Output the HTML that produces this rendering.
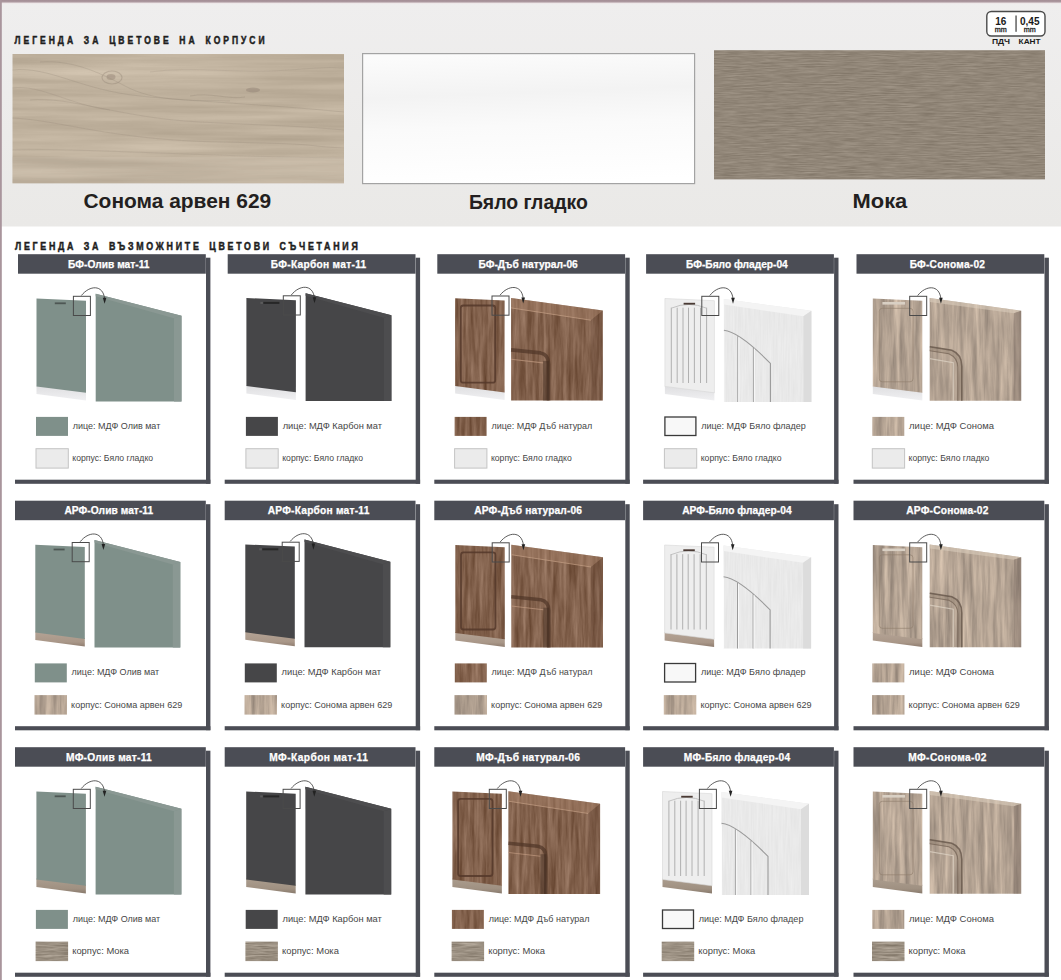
<!DOCTYPE html><html><head><meta charset="utf-8"><title>Legend</title><style>html,body{margin:0;padding:0;background:#fff;width:1061px;height:980px;overflow:hidden}body{font-family:"Liberation Sans",sans-serif}</style></head><body><svg width="1061" height="980" viewBox="0 0 1061 980" style="display:block" font-family="'Liberation Sans', sans-serif"><defs><filter id="tSonH" x="0" y="0" width="100%" height="100%" color-interpolation-filters="sRGB"><feTurbulence type="fractalNoise" baseFrequency="0.004 0.09" numOctaves="5" seed="3" result="n"/><feColorMatrix in="n" type="matrix" values="0.1800 0.0000 0.0000 0.0000 0.6590 0.1800 0.0000 0.0000 0.0000 0.6041 0.1800 0.0000 0.0000 0.0000 0.5257 0.0000 0.0000 0.0000 0.0000 1.0000" result="c"/><feComposite in="c" in2="SourceGraphic" operator="in"/></filter><filter id="tMokaH" x="0" y="0" width="100%" height="100%" color-interpolation-filters="sRGB"><feTurbulence type="fractalNoise" baseFrequency="0.05 0.9" numOctaves="3" seed="5" result="n"/><feColorMatrix in="n" type="matrix" values="0.1600 0.0000 0.0000 0.0000 0.4886 0.1600 0.0000 0.0000 0.0000 0.4455 0.1600 0.0000 0.0000 0.0000 0.3906 0.0000 0.0000 0.0000 0.0000 1.0000" result="c"/><feComposite in="c" in2="SourceGraphic" operator="in"/></filter><filter id="tSonV" x="0" y="0" width="100%" height="100%" color-interpolation-filters="sRGB"><feTurbulence type="fractalNoise" baseFrequency="0.2 0.015" numOctaves="4" seed="7" result="n"/><feColorMatrix in="n" type="matrix" values="0.3700 0.0000 0.0000 0.0000 0.5209 0.3400 0.0000 0.0000 0.0000 0.4692 0.3000 0.0000 0.0000 0.0000 0.4265 0.0000 0.0000 0.0000 0.0000 1.0000" result="c"/><feComposite in="c" in2="SourceGraphic" operator="in"/></filter><filter id="tOakV" x="0" y="0" width="100%" height="100%" color-interpolation-filters="sRGB"><feTurbulence type="fractalNoise" baseFrequency="0.25 0.02" numOctaves="4" seed="9" result="n"/><feColorMatrix in="n" type="matrix" values="0.3000 0.0000 0.0000 0.0000 0.3637 0.3000 0.0000 0.0000 0.0000 0.2343 0.3000 0.0000 0.0000 0.0000 0.1520 0.0000 0.0000 0.0000 0.0000 1.0000" result="c"/><feComposite in="c" in2="SourceGraphic" operator="in"/></filter><filter id="tMokaS" x="0" y="0" width="100%" height="100%" color-interpolation-filters="sRGB"><feTurbulence type="fractalNoise" baseFrequency="0.05 0.9" numOctaves="3" seed="13" result="n"/><feColorMatrix in="n" type="matrix" values="0.3000 0.0000 0.0000 0.0000 0.4578 0.3000 0.0000 0.0000 0.0000 0.4147 0.3000 0.0000 0.0000 0.0000 0.3598 0.0000 0.0000 0.0000 0.0000 1.0000" result="c"/><feComposite in="c" in2="SourceGraphic" operator="in"/></filter><filter id="tWhiteV" x="0" y="0" width="100%" height="100%" color-interpolation-filters="sRGB"><feTurbulence type="fractalNoise" baseFrequency="0.6 0.03" numOctaves="2" seed="11" result="n"/><feColorMatrix in="n" type="matrix" values="0.0500 0.0000 0.0000 0.0000 0.8887 0.0500 0.0000 0.0000 0.0000 0.8887 0.0500 0.0000 0.0000 0.0000 0.8887 0.0000 0.0000 0.0000 0.0000 1.0000" result="c"/><feComposite in="c" in2="SourceGraphic" operator="in"/></filter><linearGradient id="gWhiteSw" x1="0.45" y1="0" x2="0.55" y2="1"><stop offset="0" stop-color="#fbfbfb"/><stop offset="0.3" stop-color="#f3f3f3"/><stop offset="0.55" stop-color="#fafafa"/><stop offset="1" stop-color="#ffffff"/></linearGradient><linearGradient id="gBand" x1="0" y1="0" x2="0" y2="1"><stop offset="0" stop-color="#efeeee"/><stop offset="1" stop-color="#eae9e7"/></linearGradient><linearGradient id="gPlinth" x1="0" y1="0" x2="0" y2="1"><stop offset="0" stop-color="#dedee0"/><stop offset="1" stop-color="#f0f0f2"/></linearGradient><linearGradient id="gTop" x1="0" y1="0" x2="0" y2="1"><stop offset="0" stop-color="#a38d95"/><stop offset="0.45" stop-color="#ab979e"/><stop offset="1" stop-color="#f0e8ea"/></linearGradient><linearGradient id="gPlSon" x1="0" y1="0" x2="0" y2="1"><stop offset="0" stop-color="#b4a395"/><stop offset="0.7" stop-color="#a99788"/><stop offset="1" stop-color="#8f7d70"/></linearGradient><linearGradient id="gPlMoka" x1="0" y1="0" x2="0" y2="1"><stop offset="0" stop-color="#ab9d8e"/><stop offset="0.7" stop-color="#9f9081"/><stop offset="1" stop-color="#887a6d"/></linearGradient><filter id="blur1" x="-5%" y="-20%" width="110%" height="140%"><feGaussianBlur stdDeviation="0.7"/></filter><marker id="arr" viewBox="0 0 10 10" refX="5" refY="9" markerWidth="5" markerHeight="6" orient="auto-start-reverse"><path d="M0,0 L10,0 L5,10 z" fill="#222"/></marker></defs><rect x="0" y="0" width="1061" height="980" fill="#ffffff"/><rect x="0" y="0" width="1061" height="226.5" fill="url(#gBand)"/><rect x="0" y="0" width="1061" height="3.6" fill="url(#gTop)"/><rect x="0" y="0" width="1.8" height="980" fill="#a9959c"/><g transform="scale(0.82 1)"><text x="17.80" y="43.80" font-size="10.40" fill="#1e1e1e" font-weight="bold" text-anchor="start" word-spacing="3" stroke="#1e1e1e" stroke-width="0.5" textLength="304.88" lengthAdjust="spacing">ЛЕГЕНДА ЗА ЦВЕТОВЕ НА КОРПУСИ</text></g><rect x="986.8" y="11.5" width="58.2" height="24.5" rx="4.5" fill="#ffffff" stroke="#4a4a4a" stroke-width="1.4"/><rect x="1015.4" y="15.5" width="1.3" height="16.3" fill="#4a4a4a"/><text x="1000.70" y="25.20" font-size="10.00" fill="#1a1a1a" font-weight="bold" text-anchor="middle">16</text><text x="1000.70" y="32.20" font-size="7.20" fill="#1a1a1a" font-weight="normal" text-anchor="middle" stroke="#1a1a1a" stroke-width="0.3">mm</text><text x="1029.70" y="25.20" font-size="10.00" fill="#1a1a1a" font-weight="bold" text-anchor="middle" textLength="19.60" lengthAdjust="spacingAndGlyphs">0,45</text><text x="1029.70" y="32.20" font-size="7.20" fill="#1a1a1a" font-weight="normal" text-anchor="middle" stroke="#1a1a1a" stroke-width="0.3">mm</text><text x="1001.00" y="44.00" font-size="7.00" fill="#1a1a1a" font-weight="bold" text-anchor="middle" textLength="18.00" lengthAdjust="spacingAndGlyphs">ПДЧ</text><text x="1029.60" y="44.00" font-size="7.00" fill="#1a1a1a" font-weight="bold" text-anchor="middle" textLength="22.00" lengthAdjust="spacingAndGlyphs">КАНТ</text><rect x="12.5" y="54" width="331.5" height="129.3" fill="#000" filter="url(#tSonH)"/><clipPath id="cpSon"><rect x="12.5" y="54" width="331.5" height="129.3"/></clipPath><g clip-path="url(#cpSon)"><g fill="none" stroke="#85776a" stroke-width="1" filter="url(#blur1)" opacity="0.6"><path d="M12,70 C50,66 80,90 140,96 S260,104 344,112" opacity="0.35"/><path d="M30,100 C70,96 120,118 200,122 S300,126 344,130" opacity="0.3"/><path d="M12,118 C60,120 110,140 220,142 S300,146 344,148" opacity="0.3"/><path d="M40,62 C70,60 95,70 125,86 S190,100 230,101" opacity="0.35"/><path d="M12,88 C40,84 70,105 110,110" opacity="0.3"/><path d="M150,72 C190,66 240,74 290,70 S330,68 344,68" opacity="0.25"/><path d="M12,150 C90,148 180,156 344,158" opacity="0.25"/><path d="M190,96 C210,92 230,100 245,97" opacity="0.4"/><ellipse cx="112" cy="77.5" rx="10" ry="6.5" opacity="0.5" stroke-width="1.2"/><ellipse cx="111" cy="77" rx="4.5" ry="3" fill="#7f6f61" stroke="none" opacity="0.55"/><ellipse cx="253" cy="90" rx="7" ry="2.6" fill="#85766a" stroke="none" opacity="0.6"/></g></g><rect x="12.5" y="157" width="331.5" height="26.3" fill="#cfc3b2" opacity="0.25"/><rect x="362.6" y="53.6" width="332" height="130" fill="url(#gWhiteSw)" stroke="#a3a3a3" stroke-width="1.2"/><rect x="714" y="50.2" width="331" height="129.2" fill="#000" filter="url(#tMokaH)"/><text x="83.50" y="208.00" font-size="20.50" fill="#231f20" font-weight="bold" text-anchor="start" textLength="187.70" lengthAdjust="spacingAndGlyphs">Сонома арвен 629</text><text x="468.90" y="208.60" font-size="20.00" fill="#231f20" font-weight="bold" text-anchor="start" textLength="119.00" lengthAdjust="spacingAndGlyphs">Бяло гладко</text><text x="852.60" y="208.30" font-size="20.00" fill="#231f20" font-weight="bold" text-anchor="start" textLength="54.70" lengthAdjust="spacingAndGlyphs">Мока</text><g transform="scale(0.82 1)"><text x="18.29" y="250.00" font-size="10.80" fill="#1e1e1e" font-weight="bold" text-anchor="start" word-spacing="3" stroke="#1e1e1e" stroke-width="0.5" textLength="418.05" lengthAdjust="spacing">ЛЕГЕНДА ЗА ВЪЗМОЖНИТЕ ЦВЕТОВИ СЪЧЕТАНИЯ</text></g><rect x="18.00" y="254.20" width="187.80" height="19.5" fill="#4b4d55"/><rect x="206.00" y="257.70" width="4.4" height="226.00" fill="#4b4d55"/><rect x="15.00" y="479.70" width="195.4" height="4.1" fill="#4b4d55"/><text x="68.10" y="267.50" font-size="10.20" fill="#ffffff" font-weight="bold" text-anchor="start" stroke="#ffffff" stroke-width="0.25" textLength="81.40" lengthAdjust="spacing">БФ-Олив мат-11</text><polygon points="36.50,385.40 86.00,391.80 86.00,400.40 36.50,393.90" fill="url(#gPlinth)"/><polygon points="36.50,298.50 86.00,300.70 86.00,392.80 36.50,386.40" fill="#7f908a"/><rect x="54.80" y="302.40" width="11" height="1.8" fill="#1e1e1e" opacity="0.5"/><polygon points="95.70,293.70 181.50,315.80 181.50,401.40 95.70,401.40" fill="#7f908a"/><polygon points="174.00,318.30 181.50,315.80 181.50,401.40 174.00,401.40" fill="#8a9893"/><polygon points="95.70,293.70 181.50,315.80 174.00,318.30 95.70,296.20" fill="#8a9893"/><rect x="73.40" y="296.30" width="17" height="19.2" fill="none" stroke="#4a4a4a" stroke-width="1"/><path d="M81.40,295.50 C89.50,285.20 103.00,284.20 104.60,298.70" fill="none" stroke="#333333" stroke-width="0.8"/><path d="M102.80,297.70 L106.40,297.70 L104.60,303.80 Z" fill="#222"/><rect x="36.00" y="416.90" width="32" height="19" fill="#7f908a"/><rect x="36.00" y="448.70" width="32.3" height="19.4" fill="#ebebeb" stroke="#c4c4c4" stroke-width="1"/><text x="72.80" y="428.90" font-size="9.70" fill="#464646" font-weight="normal" text-anchor="start" textLength="87.50" lengthAdjust="spacingAndGlyphs">лице: МДФ Олив мат</text><text x="72.30" y="461.00" font-size="9.70" fill="#464646" font-weight="normal" text-anchor="start" textLength="80.80" lengthAdjust="spacingAndGlyphs">корпус: Бяло гладко</text><rect x="227.70" y="254.20" width="187.80" height="19.5" fill="#4b4d55"/><rect x="415.70" y="257.70" width="4.4" height="226.00" fill="#4b4d55"/><rect x="224.70" y="479.70" width="195.4" height="4.1" fill="#4b4d55"/><text x="270.80" y="267.50" font-size="10.20" fill="#ffffff" font-weight="bold" text-anchor="start" stroke="#ffffff" stroke-width="0.25" textLength="95.40" lengthAdjust="spacing">БФ-Карбон мат-11</text><polygon points="246.40,384.90 295.90,391.30 295.90,399.90 246.40,393.40" fill="url(#gPlinth)"/><polygon points="246.40,298.00 295.90,300.20 295.90,392.30 246.40,385.90" fill="#464648"/><rect x="263.40" y="301.90" width="16" height="2" fill="#1a1a1a" opacity="0.7"/><rect x="260.40" y="301.90" width="2.5" height="2" fill="#6a6a6a" opacity="0.6"/><polygon points="305.60,293.20 391.40,315.30 391.40,400.90 305.60,400.90" fill="#464648"/><polygon points="383.90,317.80 391.40,315.30 391.40,400.90 383.90,400.90" fill="#4d4d4f"/><polygon points="305.60,293.20 391.40,315.30 383.90,317.80 305.60,295.70" fill="#4d4d4f"/><rect x="283.30" y="295.80" width="17" height="19.2" fill="none" stroke="#4a4a4a" stroke-width="1"/><path d="M291.30,295.00 C299.40,284.70 312.90,283.70 314.50,298.20" fill="none" stroke="#333333" stroke-width="0.8"/><path d="M312.70,297.20 L316.30,297.20 L314.50,303.30 Z" fill="#222"/><rect x="245.90" y="416.90" width="32" height="19" fill="#464648"/><rect x="245.90" y="448.70" width="32.3" height="19.4" fill="#ebebeb" stroke="#c4c4c4" stroke-width="1"/><text x="282.70" y="428.90" font-size="9.70" fill="#464646" font-weight="normal" text-anchor="start" textLength="99.30" lengthAdjust="spacingAndGlyphs">лице: МДФ Карбон мат</text><text x="282.20" y="461.00" font-size="9.70" fill="#464646" font-weight="normal" text-anchor="start" textLength="80.80" lengthAdjust="spacingAndGlyphs">корпус: Бяло гладко</text><rect x="437.30" y="254.20" width="187.80" height="19.5" fill="#4b4d55"/><rect x="625.30" y="257.70" width="4.4" height="226.00" fill="#4b4d55"/><rect x="434.30" y="479.70" width="195.4" height="4.1" fill="#4b4d55"/><text x="478.45" y="267.50" font-size="10.20" fill="#ffffff" font-weight="bold" text-anchor="start" stroke="#ffffff" stroke-width="0.25" textLength="99.30" lengthAdjust="spacing">БФ-Дъб натурал-06</text><polygon points="455.10,385.10 504.60,391.50 504.60,400.10 455.10,393.60" fill="url(#gPlinth)"/><polygon points="455.10,298.20 504.60,300.40 504.60,392.50 455.10,386.10" fill="#000" filter="url(#tOakV)"/><rect x="460.80" y="305.50" width="34.4" height="77.2" rx="2.5" fill="none" stroke="#55382a" stroke-width="1.8" opacity="0.85"/><polygon points="511.10,297.90 602.80,310.40 602.80,400.60 511.10,400.60" fill="#000" filter="url(#tOakV)"/><polygon points="511.10,297.90 602.80,310.40 590.80,320.20 511.10,307.90" fill="#b08a70" opacity="0.4"/><polygon points="590.80,320.20 602.80,310.40 602.80,400.60 590.80,400.60" fill="#5a3e2e" opacity="0.2"/><line x1="511.10" y1="307.90" x2="590.80" y2="320.20" stroke="#c9a58a" stroke-width="0.8" opacity="0.8"/><path d="M511.10,349.90 L540.60,352.90 Q548.60,354.40 548.60,363.90 L548.60,400.60" fill="none" stroke="#4f3526" stroke-width="3.6" opacity="0.7"/><rect x="543.10" y="360.90" width="6" height="39.70" fill="#3e2a1f" opacity="0.45"/><path d="M511.10,359.20 L543.10,362.90" fill="none" stroke="#c09a80" stroke-width="1.1" opacity="0.7"/><rect x="492.00" y="296.00" width="17" height="19.2" fill="none" stroke="#4a4a4a" stroke-width="1"/><path d="M500.00,295.20 C508.10,284.90 521.60,283.90 523.20,298.40" fill="none" stroke="#333333" stroke-width="0.8"/><path d="M521.40,297.40 L525.00,297.40 L523.20,303.50 Z" fill="#222"/><rect x="454.60" y="416.90" width="32" height="19" fill="#000" filter="url(#tOakV)"/><rect x="454.60" y="448.70" width="32.3" height="19.4" fill="#ebebeb" stroke="#c4c4c4" stroke-width="1"/><text x="491.40" y="428.90" font-size="9.70" fill="#464646" font-weight="normal" text-anchor="start" textLength="100.90" lengthAdjust="spacingAndGlyphs">лице: МДФ Дъб натурал</text><text x="490.90" y="461.00" font-size="9.70" fill="#464646" font-weight="normal" text-anchor="start" textLength="80.80" lengthAdjust="spacingAndGlyphs">корпус: Бяло гладко</text><rect x="646.10" y="254.20" width="187.80" height="19.5" fill="#4b4d55"/><rect x="834.10" y="257.70" width="4.4" height="226.00" fill="#4b4d55"/><rect x="643.10" y="479.70" width="195.4" height="4.1" fill="#4b4d55"/><text x="686.10" y="267.50" font-size="10.20" fill="#ffffff" font-weight="bold" text-anchor="start" stroke="#ffffff" stroke-width="0.25" textLength="101.60" lengthAdjust="spacing">БФ-Бяло фладер-04</text><polygon points="664.90,385.40 714.40,391.80 714.40,400.40 664.90,393.90" fill="url(#gPlinth)"/><polygon points="664.90,298.50 714.40,300.70 714.40,392.80 664.90,386.40" fill="#eeeeee" stroke="#d6d6d6" stroke-width="0.6"/><line x1="671.30" y1="307.70" x2="671.30" y2="383.00" stroke="#a9a9a9" stroke-width="0.9"/><line x1="677.20" y1="307.70" x2="677.20" y2="383.00" stroke="#a9a9a9" stroke-width="0.9"/><line x1="683.00" y1="307.70" x2="683.00" y2="383.00" stroke="#a9a9a9" stroke-width="0.9"/><line x1="688.50" y1="307.70" x2="688.50" y2="383.00" stroke="#a9a9a9" stroke-width="0.9"/><line x1="694.40" y1="307.70" x2="694.40" y2="383.00" stroke="#a9a9a9" stroke-width="0.9"/><line x1="700.50" y1="307.70" x2="700.50" y2="383.00" stroke="#a9a9a9" stroke-width="0.9"/><line x1="706.60" y1="307.70" x2="706.60" y2="383.00" stroke="#a9a9a9" stroke-width="0.9"/><path d="M671.20,308.20 Q688.90,300.70 706.60,308.20" fill="none" stroke="#bdbdbd" stroke-width="0.9"/><rect x="683.60" y="302.80" width="11.5" height="1.8" fill="#4a3a34"/><polygon points="723.90,299.10 811.40,310.70 811.40,402.00 723.90,402.00" fill="#000" filter="url(#tWhiteV)"/><polygon points="723.90,299.10 811.40,310.70 803.40,316.20 723.90,304.60" fill="#f4f4f4"/><polygon points="803.40,316.20 811.40,310.70 811.40,402.00 803.40,402.00" fill="#dcdcdc"/><path d="M723.90,330.30 C737.90,331.70 758.40,351.20 770.40,363.40 L770.40,402.00" fill="none" stroke="#9a9a9a" stroke-width="1.1"/><path d="M723.90,332.20 L723.90,402.00" fill="none" stroke="#ffffff" stroke-width="1" opacity="0.8"/><line x1="737.80" y1="336.20" x2="737.80" y2="402.00" stroke="#9c9c9c" stroke-width="1"/><line x1="738.80" y1="337.20" x2="738.80" y2="402.00" stroke="#f8f8f8" stroke-width="1"/><line x1="753.40" y1="347.70" x2="753.40" y2="402.00" stroke="#9c9c9c" stroke-width="1"/><line x1="754.40" y1="348.70" x2="754.40" y2="402.00" stroke="#f8f8f8" stroke-width="1"/><rect x="701.80" y="296.30" width="17" height="19.2" fill="none" stroke="#4a4a4a" stroke-width="1"/><path d="M709.80,295.50 C717.90,285.20 731.40,284.20 733.00,298.70" fill="none" stroke="#333333" stroke-width="0.8"/><path d="M731.20,297.70 L734.80,297.70 L733.00,303.80 Z" fill="#222"/><rect x="664.90" y="417.00" width="31" height="18.5" fill="#f8f8f8" stroke="#3a3a3a" stroke-width="1.3"/><rect x="664.40" y="448.70" width="32.3" height="19.4" fill="#ebebeb" stroke="#c4c4c4" stroke-width="1"/><text x="701.20" y="428.90" font-size="9.70" fill="#464646" font-weight="normal" text-anchor="start" textLength="104.60" lengthAdjust="spacingAndGlyphs">лице: МДФ Бяло фладер</text><text x="700.70" y="461.00" font-size="9.70" fill="#464646" font-weight="normal" text-anchor="start" textLength="80.80" lengthAdjust="spacingAndGlyphs">корпус: Бяло гладко</text><rect x="856.50" y="254.20" width="187.80" height="19.5" fill="#4b4d55"/><rect x="1044.50" y="257.70" width="4.4" height="226.00" fill="#4b4d55"/><rect x="853.50" y="479.70" width="195.4" height="4.1" fill="#4b4d55"/><text x="909.65" y="267.50" font-size="10.20" fill="#ffffff" font-weight="bold" text-anchor="start" stroke="#ffffff" stroke-width="0.25" textLength="75.30" lengthAdjust="spacing">БФ-Сонома-02</text><polygon points="872.80,385.40 922.30,391.80 922.30,400.40 872.80,393.90" fill="url(#gPlinth)"/><polygon points="872.80,298.50 922.30,300.70 922.30,392.80 872.80,386.40" fill="#000" filter="url(#tSonV)"/><rect x="879.30" y="308.30" width="33.7" height="73.5" rx="3" fill="none" stroke="#8f7e6c" stroke-width="0.9" opacity="0.7"/><rect x="882.40" y="302.00" width="22.7" height="2.6" fill="#d9d0c4"/><polygon points="929.70,297.90 1021.20,310.70 1021.20,400.80 929.70,400.80" fill="#000" filter="url(#tSonV)"/><polygon points="929.70,297.90 1021.20,310.70 1013.80,313.20 929.70,301.90" fill="#d8cbbb" opacity="0.6"/><polygon points="1013.80,313.20 1021.20,310.70 1021.20,400.80 1013.80,400.80" fill="#6e6058" opacity="0.4"/><path d="M929.70,348.20 L949.80,351.70 Q959.80,356.20 959.80,367.20 L959.80,400.80" fill="none" stroke="#8a7868" stroke-width="5" opacity="0.35"/><path d="M929.70,346.70 L951.80,350.20 Q961.80,354.20 961.80,366.20 L961.80,400.80" fill="none" stroke="#5e4f43" stroke-width="1.6" opacity="0.7"/><path d="M929.70,350.70 L948.80,353.70 Q957.80,357.70 957.80,367.20 L957.80,400.80" fill="none" stroke="#6a5a4c" stroke-width="1.1" opacity="0.6"/><path d="M929.70,358.70 L953.30,362.70 L953.30,400.80" fill="none" stroke="#e0d5c8" stroke-width="1.2" opacity="0.7"/><rect x="909.70" y="296.30" width="17" height="19.2" fill="none" stroke="#4a4a4a" stroke-width="1"/><path d="M917.70,295.50 C925.80,285.20 939.30,284.20 940.90,298.70" fill="none" stroke="#333333" stroke-width="0.8"/><path d="M939.10,297.70 L942.70,297.70 L940.90,303.80 Z" fill="#222"/><rect x="872.30" y="416.90" width="32" height="19" fill="#000" filter="url(#tSonV)"/><rect x="872.30" y="448.70" width="32.3" height="19.4" fill="#ebebeb" stroke="#c4c4c4" stroke-width="1"/><text x="909.10" y="428.90" font-size="9.70" fill="#464646" font-weight="normal" text-anchor="start" textLength="84.80" lengthAdjust="spacingAndGlyphs">лице: МДФ Сонома</text><text x="908.60" y="461.00" font-size="9.70" fill="#464646" font-weight="normal" text-anchor="start" textLength="80.80" lengthAdjust="spacingAndGlyphs">корпус: Бяло гладко</text><rect x="15.00" y="500.70" width="190.80" height="19.5" fill="#4b4d55"/><rect x="206.00" y="504.20" width="4.4" height="226.00" fill="#4b4d55"/><rect x="15.00" y="726.20" width="195.4" height="4.1" fill="#4b4d55"/><text x="64.40" y="514.00" font-size="10.20" fill="#ffffff" font-weight="bold" text-anchor="start" stroke="#ffffff" stroke-width="0.25" textLength="88.80" lengthAdjust="spacing">АРФ-Олив мат-11</text><polygon points="35.30,631.60 84.80,638.00 84.80,646.60 35.30,640.10" fill="url(#gPlSon)"/><polygon points="35.30,544.70 84.80,546.90 84.80,639.00 35.30,632.60" fill="#7f908a"/><rect x="53.60" y="548.60" width="11" height="1.8" fill="#1e1e1e" opacity="0.5"/><polygon points="94.50,539.90 180.30,562.00 180.30,647.60 94.50,647.60" fill="#7f908a"/><polygon points="172.80,564.50 180.30,562.00 180.30,647.60 172.80,647.60" fill="#8a9893"/><polygon points="94.50,539.90 180.30,562.00 172.80,564.50 94.50,542.40" fill="#8a9893"/><rect x="72.20" y="542.50" width="17" height="19.2" fill="none" stroke="#4a4a4a" stroke-width="1"/><path d="M80.20,541.70 C88.30,531.40 101.80,530.40 103.40,544.90" fill="none" stroke="#333333" stroke-width="0.8"/><path d="M101.60,543.90 L105.20,543.90 L103.40,550.00 Z" fill="#222"/><rect x="34.80" y="663.40" width="32" height="19" fill="#7f908a"/><rect x="34.50" y="695.10" width="32.5" height="19.5" fill="#000" filter="url(#tSonV)"/><text x="71.60" y="675.40" font-size="9.70" fill="#464646" font-weight="normal" text-anchor="start" textLength="87.50" lengthAdjust="spacingAndGlyphs">лице: МДФ Олив мат</text><text x="71.10" y="707.50" font-size="9.70" fill="#464646" font-weight="normal" text-anchor="start" textLength="111.20" lengthAdjust="spacingAndGlyphs">корпус: Сонома арвен 629</text><rect x="224.70" y="500.70" width="190.80" height="19.5" fill="#4b4d55"/><rect x="415.70" y="504.20" width="4.4" height="226.00" fill="#4b4d55"/><rect x="224.70" y="726.20" width="195.4" height="4.1" fill="#4b4d55"/><text x="267.70" y="514.00" font-size="10.20" fill="#ffffff" font-weight="bold" text-anchor="start" stroke="#ffffff" stroke-width="0.25" textLength="101.60" lengthAdjust="spacing">АРФ-Карбон мат-11</text><polygon points="245.30,631.30 294.80,637.70 294.80,646.30 245.30,639.80" fill="url(#gPlSon)"/><polygon points="245.30,544.40 294.80,546.60 294.80,638.70 245.30,632.30" fill="#464648"/><rect x="262.30" y="548.30" width="16" height="2" fill="#1a1a1a" opacity="0.7"/><rect x="259.30" y="548.30" width="2.5" height="2" fill="#6a6a6a" opacity="0.6"/><polygon points="304.50,539.60 390.30,561.70 390.30,647.30 304.50,647.30" fill="#464648"/><polygon points="382.80,564.20 390.30,561.70 390.30,647.30 382.80,647.30" fill="#4d4d4f"/><polygon points="304.50,539.60 390.30,561.70 382.80,564.20 304.50,542.10" fill="#4d4d4f"/><rect x="282.20" y="542.20" width="17" height="19.2" fill="none" stroke="#4a4a4a" stroke-width="1"/><path d="M290.20,541.40 C298.30,531.10 311.80,530.10 313.40,544.60" fill="none" stroke="#333333" stroke-width="0.8"/><path d="M311.60,543.60 L315.20,543.60 L313.40,549.70 Z" fill="#222"/><rect x="244.80" y="663.40" width="32" height="19" fill="#464648"/><rect x="244.50" y="695.10" width="32.5" height="19.5" fill="#000" filter="url(#tSonV)"/><text x="281.60" y="675.40" font-size="9.70" fill="#464646" font-weight="normal" text-anchor="start" textLength="99.30" lengthAdjust="spacingAndGlyphs">лице: МДФ Карбон мат</text><text x="281.10" y="707.50" font-size="9.70" fill="#464646" font-weight="normal" text-anchor="start" textLength="111.20" lengthAdjust="spacingAndGlyphs">корпус: Сонома арвен 629</text><rect x="434.30" y="500.70" width="190.80" height="19.5" fill="#4b4d55"/><rect x="625.30" y="504.20" width="4.4" height="226.00" fill="#4b4d55"/><rect x="434.30" y="726.20" width="195.4" height="4.1" fill="#4b4d55"/><text x="474.35" y="514.00" font-size="10.20" fill="#ffffff" font-weight="bold" text-anchor="start" stroke="#ffffff" stroke-width="0.25" textLength="107.50" lengthAdjust="spacing">АРФ-Дъб натурал-06</text><polygon points="455.30,631.90 504.80,638.30 504.80,646.90 455.30,640.40" fill="url(#gPlSon)"/><polygon points="455.30,545.00 504.80,547.20 504.80,639.30 455.30,632.90" fill="#000" filter="url(#tOakV)"/><rect x="461.00" y="552.30" width="34.4" height="77.2" rx="2.5" fill="none" stroke="#55382a" stroke-width="1.8" opacity="0.85"/><polygon points="511.30,544.70 603.00,557.20 603.00,647.40 511.30,647.40" fill="#000" filter="url(#tOakV)"/><polygon points="511.30,544.70 603.00,557.20 591.00,567.00 511.30,554.70" fill="#b08a70" opacity="0.4"/><polygon points="591.00,567.00 603.00,557.20 603.00,647.40 591.00,647.40" fill="#5a3e2e" opacity="0.2"/><line x1="511.30" y1="554.70" x2="591.00" y2="567.00" stroke="#c9a58a" stroke-width="0.8" opacity="0.8"/><path d="M511.30,596.70 L540.80,599.70 Q548.80,601.20 548.80,610.70 L548.80,647.40" fill="none" stroke="#4f3526" stroke-width="3.6" opacity="0.7"/><rect x="543.30" y="607.70" width="6" height="39.70" fill="#3e2a1f" opacity="0.45"/><path d="M511.30,606.00 L543.30,609.70" fill="none" stroke="#c09a80" stroke-width="1.1" opacity="0.7"/><rect x="492.20" y="542.80" width="17" height="19.2" fill="none" stroke="#4a4a4a" stroke-width="1"/><path d="M500.20,542.00 C508.30,531.70 521.80,530.70 523.40,545.20" fill="none" stroke="#333333" stroke-width="0.8"/><path d="M521.60,544.20 L525.20,544.20 L523.40,550.30 Z" fill="#222"/><rect x="454.80" y="663.40" width="32" height="19" fill="#000" filter="url(#tOakV)"/><rect x="454.50" y="695.10" width="32.5" height="19.5" fill="#000" filter="url(#tSonV)"/><text x="491.60" y="675.40" font-size="9.70" fill="#464646" font-weight="normal" text-anchor="start" textLength="100.90" lengthAdjust="spacingAndGlyphs">лице: МДФ Дъб натурал</text><text x="491.10" y="707.50" font-size="9.70" fill="#464646" font-weight="normal" text-anchor="start" textLength="111.20" lengthAdjust="spacingAndGlyphs">корпус: Сонома арвен 629</text><rect x="643.10" y="500.70" width="190.80" height="19.5" fill="#4b4d55"/><rect x="834.10" y="504.20" width="4.4" height="226.00" fill="#4b4d55"/><rect x="643.10" y="726.20" width="195.4" height="4.1" fill="#4b4d55"/><text x="682.20" y="514.00" font-size="10.20" fill="#ffffff" font-weight="bold" text-anchor="start" stroke="#ffffff" stroke-width="0.25" textLength="109.40" lengthAdjust="spacing">АРФ-Бяло фладер-04</text><polygon points="664.60,631.90 714.10,638.30 714.10,646.90 664.60,640.40" fill="url(#gPlSon)"/><polygon points="664.60,545.00 714.10,547.20 714.10,639.30 664.60,632.90" fill="#eeeeee" stroke="#d6d6d6" stroke-width="0.6"/><line x1="671.00" y1="554.20" x2="671.00" y2="629.50" stroke="#a9a9a9" stroke-width="0.9"/><line x1="676.90" y1="554.20" x2="676.90" y2="629.50" stroke="#a9a9a9" stroke-width="0.9"/><line x1="682.70" y1="554.20" x2="682.70" y2="629.50" stroke="#a9a9a9" stroke-width="0.9"/><line x1="688.20" y1="554.20" x2="688.20" y2="629.50" stroke="#a9a9a9" stroke-width="0.9"/><line x1="694.10" y1="554.20" x2="694.10" y2="629.50" stroke="#a9a9a9" stroke-width="0.9"/><line x1="700.20" y1="554.20" x2="700.20" y2="629.50" stroke="#a9a9a9" stroke-width="0.9"/><line x1="706.30" y1="554.20" x2="706.30" y2="629.50" stroke="#a9a9a9" stroke-width="0.9"/><path d="M670.90,554.70 Q688.60,547.20 706.30,554.70" fill="none" stroke="#bdbdbd" stroke-width="0.9"/><rect x="683.30" y="549.30" width="11.5" height="1.8" fill="#4a3a34"/><polygon points="723.60,545.60 811.10,557.20 811.10,648.50 723.60,648.50" fill="#000" filter="url(#tWhiteV)"/><polygon points="723.60,545.60 811.10,557.20 803.10,562.70 723.60,551.10" fill="#f4f4f4"/><polygon points="803.10,562.70 811.10,557.20 811.10,648.50 803.10,648.50" fill="#dcdcdc"/><path d="M723.60,576.80 C737.60,578.20 758.10,597.70 770.10,609.90 L770.10,648.50" fill="none" stroke="#9a9a9a" stroke-width="1.1"/><path d="M723.60,578.70 L723.60,648.50" fill="none" stroke="#ffffff" stroke-width="1" opacity="0.8"/><line x1="737.50" y1="582.70" x2="737.50" y2="648.50" stroke="#9c9c9c" stroke-width="1"/><line x1="738.50" y1="583.70" x2="738.50" y2="648.50" stroke="#f8f8f8" stroke-width="1"/><line x1="753.10" y1="594.20" x2="753.10" y2="648.50" stroke="#9c9c9c" stroke-width="1"/><line x1="754.10" y1="595.20" x2="754.10" y2="648.50" stroke="#f8f8f8" stroke-width="1"/><rect x="701.50" y="542.80" width="17" height="19.2" fill="none" stroke="#4a4a4a" stroke-width="1"/><path d="M709.50,542.00 C717.60,531.70 731.10,530.70 732.70,545.20" fill="none" stroke="#333333" stroke-width="0.8"/><path d="M730.90,544.20 L734.50,544.20 L732.70,550.30 Z" fill="#222"/><rect x="664.60" y="663.50" width="31" height="18.5" fill="#f8f8f8" stroke="#3a3a3a" stroke-width="1.3"/><rect x="663.80" y="695.10" width="32.5" height="19.5" fill="#000" filter="url(#tSonV)"/><text x="700.90" y="675.40" font-size="9.70" fill="#464646" font-weight="normal" text-anchor="start" textLength="104.60" lengthAdjust="spacingAndGlyphs">лице: МДФ Бяло фладер</text><text x="700.40" y="707.50" font-size="9.70" fill="#464646" font-weight="normal" text-anchor="start" textLength="111.20" lengthAdjust="spacingAndGlyphs">корпус: Сонома арвен 629</text><rect x="853.50" y="500.70" width="190.80" height="19.5" fill="#4b4d55"/><rect x="1044.50" y="504.20" width="4.4" height="226.00" fill="#4b4d55"/><rect x="853.50" y="726.20" width="195.4" height="4.1" fill="#4b4d55"/><text x="906.20" y="514.00" font-size="10.20" fill="#ffffff" font-weight="bold" text-anchor="start" stroke="#ffffff" stroke-width="0.25" textLength="82.20" lengthAdjust="spacing">АРФ-Сонома-02</text><polygon points="872.80,631.90 922.30,638.30 922.30,646.90 872.80,640.40" fill="url(#gPlSon)"/><polygon points="872.80,545.00 922.30,547.20 922.30,639.30 872.80,632.90" fill="#000" filter="url(#tSonV)"/><rect x="879.30" y="554.80" width="33.7" height="73.5" rx="3" fill="none" stroke="#8f7e6c" stroke-width="0.9" opacity="0.7"/><rect x="882.40" y="548.50" width="22.7" height="2.6" fill="#d9d0c4"/><polygon points="929.70,544.40 1021.20,557.20 1021.20,647.30 929.70,647.30" fill="#000" filter="url(#tSonV)"/><polygon points="929.70,544.40 1021.20,557.20 1013.80,559.70 929.70,548.40" fill="#d8cbbb" opacity="0.6"/><polygon points="1013.80,559.70 1021.20,557.20 1021.20,647.30 1013.80,647.30" fill="#6e6058" opacity="0.4"/><path d="M929.70,594.70 L949.80,598.20 Q959.80,602.70 959.80,613.70 L959.80,647.30" fill="none" stroke="#8a7868" stroke-width="5" opacity="0.35"/><path d="M929.70,593.20 L951.80,596.70 Q961.80,600.70 961.80,612.70 L961.80,647.30" fill="none" stroke="#5e4f43" stroke-width="1.6" opacity="0.7"/><path d="M929.70,597.20 L948.80,600.20 Q957.80,604.20 957.80,613.70 L957.80,647.30" fill="none" stroke="#6a5a4c" stroke-width="1.1" opacity="0.6"/><path d="M929.70,605.20 L953.30,609.20 L953.30,647.30" fill="none" stroke="#e0d5c8" stroke-width="1.2" opacity="0.7"/><rect x="909.70" y="542.80" width="17" height="19.2" fill="none" stroke="#4a4a4a" stroke-width="1"/><path d="M917.70,542.00 C925.80,531.70 939.30,530.70 940.90,545.20" fill="none" stroke="#333333" stroke-width="0.8"/><path d="M939.10,544.20 L942.70,544.20 L940.90,550.30 Z" fill="#222"/><rect x="872.30" y="663.40" width="32" height="19" fill="#000" filter="url(#tSonV)"/><rect x="872.00" y="695.10" width="32.5" height="19.5" fill="#000" filter="url(#tSonV)"/><text x="909.10" y="675.40" font-size="9.70" fill="#464646" font-weight="normal" text-anchor="start" textLength="84.80" lengthAdjust="spacingAndGlyphs">лице: МДФ Сонома</text><text x="908.60" y="707.50" font-size="9.70" fill="#464646" font-weight="normal" text-anchor="start" textLength="111.20" lengthAdjust="spacingAndGlyphs">корпус: Сонома арвен 629</text><rect x="15.00" y="747.20" width="190.80" height="19.5" fill="#4b4d55"/><rect x="206.00" y="750.70" width="4.4" height="226.00" fill="#4b4d55"/><rect x="15.00" y="972.70" width="195.4" height="4.1" fill="#4b4d55"/><text x="65.90" y="760.50" font-size="10.20" fill="#ffffff" font-weight="bold" text-anchor="start" stroke="#ffffff" stroke-width="0.25" textLength="85.80" lengthAdjust="spacing">МФ-Олив мат-11</text><polygon points="36.40,878.40 85.90,884.80 85.90,893.40 36.40,886.90" fill="url(#gPlMoka)"/><polygon points="36.40,791.50 85.90,793.70 85.90,885.80 36.40,879.40" fill="#7f908a"/><rect x="54.70" y="795.40" width="11" height="1.8" fill="#1e1e1e" opacity="0.5"/><polygon points="95.60,786.70 181.40,808.80 181.40,894.40 95.60,894.40" fill="#7f908a"/><polygon points="173.90,811.30 181.40,808.80 181.40,894.40 173.90,894.40" fill="#8a9893"/><polygon points="95.60,786.70 181.40,808.80 173.90,811.30 95.60,789.20" fill="#8a9893"/><rect x="73.30" y="789.30" width="17" height="19.2" fill="none" stroke="#4a4a4a" stroke-width="1"/><path d="M81.30,788.50 C89.40,778.20 102.90,777.20 104.50,791.70" fill="none" stroke="#333333" stroke-width="0.8"/><path d="M102.70,790.70 L106.30,790.70 L104.50,796.80 Z" fill="#222"/><rect x="35.90" y="909.90" width="32" height="19" fill="#7f908a"/><rect x="35.60" y="941.60" width="32.5" height="19.5" fill="#000" filter="url(#tMokaS)"/><text x="72.70" y="921.90" font-size="9.70" fill="#464646" font-weight="normal" text-anchor="start" textLength="87.50" lengthAdjust="spacingAndGlyphs">лице: МДФ Олив мат</text><text x="72.20" y="954.00" font-size="9.70" fill="#464646" font-weight="normal" text-anchor="start" textLength="56.90" lengthAdjust="spacingAndGlyphs">корпус: Мока</text><rect x="224.70" y="747.20" width="190.80" height="19.5" fill="#4b4d55"/><rect x="415.70" y="750.70" width="4.4" height="226.00" fill="#4b4d55"/><rect x="224.70" y="972.70" width="195.4" height="4.1" fill="#4b4d55"/><text x="269.20" y="760.50" font-size="10.20" fill="#ffffff" font-weight="bold" text-anchor="start" stroke="#ffffff" stroke-width="0.25" textLength="98.60" lengthAdjust="spacing">МФ-Карбон мат-11</text><polygon points="246.20,878.40 295.70,884.80 295.70,893.40 246.20,886.90" fill="url(#gPlMoka)"/><polygon points="246.20,791.50 295.70,793.70 295.70,885.80 246.20,879.40" fill="#464648"/><rect x="263.20" y="795.40" width="16" height="2" fill="#1a1a1a" opacity="0.7"/><rect x="260.20" y="795.40" width="2.5" height="2" fill="#6a6a6a" opacity="0.6"/><polygon points="305.40,786.70 391.20,808.80 391.20,894.40 305.40,894.40" fill="#464648"/><polygon points="383.70,811.30 391.20,808.80 391.20,894.40 383.70,894.40" fill="#4d4d4f"/><polygon points="305.40,786.70 391.20,808.80 383.70,811.30 305.40,789.20" fill="#4d4d4f"/><rect x="283.10" y="789.30" width="17" height="19.2" fill="none" stroke="#4a4a4a" stroke-width="1"/><path d="M291.10,788.50 C299.20,778.20 312.70,777.20 314.30,791.70" fill="none" stroke="#333333" stroke-width="0.8"/><path d="M312.50,790.70 L316.10,790.70 L314.30,796.80 Z" fill="#222"/><rect x="245.70" y="909.90" width="32" height="19" fill="#464648"/><rect x="245.40" y="941.60" width="32.5" height="19.5" fill="#000" filter="url(#tMokaS)"/><text x="282.50" y="921.90" font-size="9.70" fill="#464646" font-weight="normal" text-anchor="start" textLength="99.30" lengthAdjust="spacingAndGlyphs">лице: МДФ Карбон мат</text><text x="282.00" y="954.00" font-size="9.70" fill="#464646" font-weight="normal" text-anchor="start" textLength="56.90" lengthAdjust="spacingAndGlyphs">корпус: Мока</text><rect x="434.30" y="747.20" width="190.80" height="19.5" fill="#4b4d55"/><rect x="625.30" y="750.70" width="4.4" height="226.00" fill="#4b4d55"/><rect x="434.30" y="972.70" width="195.4" height="4.1" fill="#4b4d55"/><text x="476.35" y="760.50" font-size="10.20" fill="#ffffff" font-weight="bold" text-anchor="start" stroke="#ffffff" stroke-width="0.25" textLength="103.50" lengthAdjust="spacing">МФ-Дъб натурал-06</text><polygon points="452.40,878.40 501.90,884.80 501.90,893.40 452.40,886.90" fill="url(#gPlMoka)"/><polygon points="452.40,791.50 501.90,793.70 501.90,885.80 452.40,879.40" fill="#000" filter="url(#tOakV)"/><rect x="458.10" y="798.80" width="34.4" height="77.2" rx="2.5" fill="none" stroke="#55382a" stroke-width="1.8" opacity="0.85"/><polygon points="508.40,791.20 600.10,803.70 600.10,893.90 508.40,893.90" fill="#000" filter="url(#tOakV)"/><polygon points="508.40,791.20 600.10,803.70 588.10,813.50 508.40,801.20" fill="#b08a70" opacity="0.4"/><polygon points="588.10,813.50 600.10,803.70 600.10,893.90 588.10,893.90" fill="#5a3e2e" opacity="0.2"/><line x1="508.40" y1="801.20" x2="588.10" y2="813.50" stroke="#c9a58a" stroke-width="0.8" opacity="0.8"/><path d="M508.40,843.20 L537.90,846.20 Q545.90,847.70 545.90,857.20 L545.90,893.90" fill="none" stroke="#4f3526" stroke-width="3.6" opacity="0.7"/><rect x="540.40" y="854.20" width="6" height="39.70" fill="#3e2a1f" opacity="0.45"/><path d="M508.40,852.50 L540.40,856.20" fill="none" stroke="#c09a80" stroke-width="1.1" opacity="0.7"/><rect x="489.30" y="789.30" width="17" height="19.2" fill="none" stroke="#4a4a4a" stroke-width="1"/><path d="M497.30,788.50 C505.40,778.20 518.90,777.20 520.50,791.70" fill="none" stroke="#333333" stroke-width="0.8"/><path d="M518.70,790.70 L522.30,790.70 L520.50,796.80 Z" fill="#222"/><rect x="451.90" y="909.90" width="32" height="19" fill="#000" filter="url(#tOakV)"/><rect x="451.60" y="941.60" width="32.5" height="19.5" fill="#000" filter="url(#tMokaS)"/><text x="488.70" y="921.90" font-size="9.70" fill="#464646" font-weight="normal" text-anchor="start" textLength="100.90" lengthAdjust="spacingAndGlyphs">лице: МДФ Дъб натурал</text><text x="488.20" y="954.00" font-size="9.70" fill="#464646" font-weight="normal" text-anchor="start" textLength="56.90" lengthAdjust="spacingAndGlyphs">корпус: Мока</text><rect x="643.10" y="747.20" width="190.80" height="19.5" fill="#4b4d55"/><rect x="834.10" y="750.70" width="4.4" height="226.00" fill="#4b4d55"/><rect x="643.10" y="972.70" width="195.4" height="4.1" fill="#4b4d55"/><text x="683.75" y="760.50" font-size="10.20" fill="#ffffff" font-weight="bold" text-anchor="start" stroke="#ffffff" stroke-width="0.25" textLength="106.30" lengthAdjust="spacing">МФ-Бяло фладер-04</text><polygon points="662.50,878.40 712.00,884.80 712.00,893.40 662.50,886.90" fill="url(#gPlMoka)"/><polygon points="662.50,791.50 712.00,793.70 712.00,885.80 662.50,879.40" fill="#eeeeee" stroke="#d6d6d6" stroke-width="0.6"/><line x1="668.90" y1="800.70" x2="668.90" y2="876.00" stroke="#a9a9a9" stroke-width="0.9"/><line x1="674.80" y1="800.70" x2="674.80" y2="876.00" stroke="#a9a9a9" stroke-width="0.9"/><line x1="680.60" y1="800.70" x2="680.60" y2="876.00" stroke="#a9a9a9" stroke-width="0.9"/><line x1="686.10" y1="800.70" x2="686.10" y2="876.00" stroke="#a9a9a9" stroke-width="0.9"/><line x1="692.00" y1="800.70" x2="692.00" y2="876.00" stroke="#a9a9a9" stroke-width="0.9"/><line x1="698.10" y1="800.70" x2="698.10" y2="876.00" stroke="#a9a9a9" stroke-width="0.9"/><line x1="704.20" y1="800.70" x2="704.20" y2="876.00" stroke="#a9a9a9" stroke-width="0.9"/><path d="M668.80,801.20 Q686.50,793.70 704.20,801.20" fill="none" stroke="#bdbdbd" stroke-width="0.9"/><rect x="681.20" y="795.80" width="11.5" height="1.8" fill="#4a3a34"/><polygon points="721.50,792.10 809.00,803.70 809.00,895.00 721.50,895.00" fill="#000" filter="url(#tWhiteV)"/><polygon points="721.50,792.10 809.00,803.70 801.00,809.20 721.50,797.60" fill="#f4f4f4"/><polygon points="801.00,809.20 809.00,803.70 809.00,895.00 801.00,895.00" fill="#dcdcdc"/><path d="M721.50,823.30 C735.50,824.70 756.00,844.20 768.00,856.40 L768.00,895.00" fill="none" stroke="#9a9a9a" stroke-width="1.1"/><path d="M721.50,825.20 L721.50,895.00" fill="none" stroke="#ffffff" stroke-width="1" opacity="0.8"/><line x1="735.40" y1="829.20" x2="735.40" y2="895.00" stroke="#9c9c9c" stroke-width="1"/><line x1="736.40" y1="830.20" x2="736.40" y2="895.00" stroke="#f8f8f8" stroke-width="1"/><line x1="751.00" y1="840.70" x2="751.00" y2="895.00" stroke="#9c9c9c" stroke-width="1"/><line x1="752.00" y1="841.70" x2="752.00" y2="895.00" stroke="#f8f8f8" stroke-width="1"/><rect x="699.40" y="789.30" width="17" height="19.2" fill="none" stroke="#4a4a4a" stroke-width="1"/><path d="M707.40,788.50 C715.50,778.20 729.00,777.20 730.60,791.70" fill="none" stroke="#333333" stroke-width="0.8"/><path d="M728.80,790.70 L732.40,790.70 L730.60,796.80 Z" fill="#222"/><rect x="662.50" y="910.00" width="31" height="18.5" fill="#f8f8f8" stroke="#3a3a3a" stroke-width="1.3"/><rect x="661.70" y="941.60" width="32.5" height="19.5" fill="#000" filter="url(#tMokaS)"/><text x="698.80" y="921.90" font-size="9.70" fill="#464646" font-weight="normal" text-anchor="start" textLength="104.60" lengthAdjust="spacingAndGlyphs">лице: МДФ Бяло фладер</text><text x="698.30" y="954.00" font-size="9.70" fill="#464646" font-weight="normal" text-anchor="start" textLength="56.90" lengthAdjust="spacingAndGlyphs">корпус: Мока</text><rect x="853.50" y="747.20" width="190.80" height="19.5" fill="#4b4d55"/><rect x="1044.50" y="750.70" width="4.4" height="226.00" fill="#4b4d55"/><rect x="853.50" y="972.70" width="195.4" height="4.1" fill="#4b4d55"/><text x="908.20" y="760.50" font-size="10.20" fill="#ffffff" font-weight="bold" text-anchor="start" stroke="#ffffff" stroke-width="0.25" textLength="78.20" lengthAdjust="spacing">МФ-Сонома-02</text><polygon points="872.80,878.40 922.30,884.80 922.30,893.40 872.80,886.90" fill="url(#gPlMoka)"/><polygon points="872.80,791.50 922.30,793.70 922.30,885.80 872.80,879.40" fill="#000" filter="url(#tSonV)"/><rect x="879.30" y="801.30" width="33.7" height="73.5" rx="3" fill="none" stroke="#8f7e6c" stroke-width="0.9" opacity="0.7"/><rect x="882.40" y="795.00" width="22.7" height="2.6" fill="#d9d0c4"/><polygon points="929.70,790.90 1021.20,803.70 1021.20,893.80 929.70,893.80" fill="#000" filter="url(#tSonV)"/><polygon points="929.70,790.90 1021.20,803.70 1013.80,806.20 929.70,794.90" fill="#d8cbbb" opacity="0.6"/><polygon points="1013.80,806.20 1021.20,803.70 1021.20,893.80 1013.80,893.80" fill="#6e6058" opacity="0.4"/><path d="M929.70,841.20 L949.80,844.70 Q959.80,849.20 959.80,860.20 L959.80,893.80" fill="none" stroke="#8a7868" stroke-width="5" opacity="0.35"/><path d="M929.70,839.70 L951.80,843.20 Q961.80,847.20 961.80,859.20 L961.80,893.80" fill="none" stroke="#5e4f43" stroke-width="1.6" opacity="0.7"/><path d="M929.70,843.70 L948.80,846.70 Q957.80,850.70 957.80,860.20 L957.80,893.80" fill="none" stroke="#6a5a4c" stroke-width="1.1" opacity="0.6"/><path d="M929.70,851.70 L953.30,855.70 L953.30,893.80" fill="none" stroke="#e0d5c8" stroke-width="1.2" opacity="0.7"/><rect x="909.70" y="789.30" width="17" height="19.2" fill="none" stroke="#4a4a4a" stroke-width="1"/><path d="M917.70,788.50 C925.80,778.20 939.30,777.20 940.90,791.70" fill="none" stroke="#333333" stroke-width="0.8"/><path d="M939.10,790.70 L942.70,790.70 L940.90,796.80 Z" fill="#222"/><rect x="872.30" y="909.90" width="32" height="19" fill="#000" filter="url(#tSonV)"/><rect x="872.00" y="941.60" width="32.5" height="19.5" fill="#000" filter="url(#tMokaS)"/><text x="909.10" y="921.90" font-size="9.70" fill="#464646" font-weight="normal" text-anchor="start" textLength="84.80" lengthAdjust="spacingAndGlyphs">лице: МДФ Сонома</text><text x="908.60" y="954.00" font-size="9.70" fill="#464646" font-weight="normal" text-anchor="start" textLength="56.90" lengthAdjust="spacingAndGlyphs">корпус: Мока</text></svg></body></html>
